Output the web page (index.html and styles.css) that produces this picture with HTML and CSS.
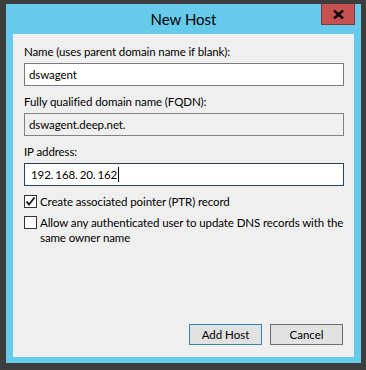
FILE: index.html
```html
<!DOCTYPE html>
<html lang="en">

<head>
    <meta charset="UTF-8" />
    <meta name="viewport" content="width=device-width, initial-scale=1.0" />
    <link rel="stylesheet" href="styles.css">
    <title>New Host</title>
</head>

<body>
    <div class="window">
        <div class="titlebar">
            <p class="title">New Host</p>
            <button class="close" type="button">
                <svg width="11" height="9" viewBox="0 0 11 9">
                    <path d="M1 0.5 L10 8.5 M10 0.5 L1 8.5" stroke="#000" stroke-width="2.4" />
                </svg>
            </button>
        </div>

        <form class="content">
            <div class="field">
                <label for="name">Name (uses parent domain name if blank):</label>
                <input type="text" id="name" value="dswagent" />
            </div>

            <div class="field">
                <label for="fqdn">Fully qualified domain name (FQDN):</label>
                <input type="text" id="fqdn" class="readonly" value="dswagent.deep.net." readonly />
            </div>

            <div class="field">
                <label>IP address:</label>
                <div class="ip-box">
                    <span>192</span><span class="dot">.</span><span>168</span><span class="dot">.</span><span>20</span><span class="dot">.</span><span>162</span><span class="caret"></span>
                </div>
            </div>

            <div class="check">
                <span class="box">
                    <svg width="11" height="11" viewBox="0 0 11 11">
                        <path d="M1.5 5.5 L4 8.5 L9.5 1.5" fill="none" stroke="#222" stroke-width="2" />
                    </svg>
                </span>
                <p>Create associated pointer (PTR) record</p>
            </div>

            <div class="check">
                <span class="box"></span>
                <p>Allow any authenticated user to update DNS records with the same owner name</p>
            </div>

            <div class="buttons">
                <button type="submit" class="default">Add Host</button>
                <button type="button">Cancel</button>
            </div>
        </form>
    </div>
</body>

</html>
```

FILE: styles.css
```css
* {
    margin: 0;
    padding: 0;
    box-sizing: border-box;
    font-family: Lato, 'Noto Sans', sans-serif;
}

body {
    background: #3d3d3d;
    padding: 4px 5px 7px 6px;
    width: 366px;
    height: 370px;
}

.window {
    background: #66cbea;
    height: 359px;
    display: flex;
    flex-direction: column;
    padding: 0 7px 6px 7px;
}

.titlebar {
    height: 30px;
    position: relative;
    display: flex;
    justify-content: center;
    align-items: center;
}

.title {
    font-size: 15px;
    color: #000;
    padding-bottom: 1px;
}

.close {
    position: absolute;
    top: 0;
    right: -1px;
    width: 34px;
    height: 21px;
    background: #c75050;
    border: 1px solid #7d3a3a;
    border-top: none;
    display: flex;
    align-items: center;
    justify-content: center;
}

.content {
    flex: 1;
    background: #efefef;
    padding: 10px 10px 0 11px;
    display: flex;
    flex-direction: column;
    font-size: 11.5px;
    letter-spacing: -0.1px;
    color: #000;
}

.field {
    display: flex;
    flex-direction: column;
    margin-bottom: 8px;
}

.field label {
    line-height: 15px;
    margin-bottom: 4px;
}

.field input,
.ip-box {
    height: 23px;
    border: 1px solid #7a7a7a;
    background: #fff;
    font-size: 11.5px;
    letter-spacing: -0.1px;
    padding: 0 4px;
    outline: none;
    color: #000;
}

.field input.readonly {
    background: #efefef;
    border-color: #828282;
}

.ip-box {
    border-color: #1f4563;
    display: flex;
    align-items: center;
    padding-left: 6px;
}

.ip-box .dot {
    margin-right: 2px;
}

.caret {
    width: 1px;
    height: 15px;
    background: #000;
    margin-left: 1px;
}

.check {
    display: flex;
    align-items: flex-start;
    margin-bottom: 6px;
}

.box {
    width: 13px;
    height: 13px;
    flex: none;
    border: 1px solid #333;
    background: #fff;
    margin-right: 3px;
    margin-top: 1px;
    display: flex;
    align-items: center;
    justify-content: center;
}

.check p {
    line-height: 15px;
}

.buttons {
    margin-top: auto;
    margin-bottom: 12px;
    display: flex;
    justify-content: flex-end;
    gap: 8px;
    padding-right: 1px;
}

.buttons button {
    width: 73px;
    height: 21px;
    background: #e1e1e1;
    border: 1px solid #707070;
    font-size: 11.5px;
    color: #000;
}

.buttons .default {
    border-color: #3c7fb1;
}
```
